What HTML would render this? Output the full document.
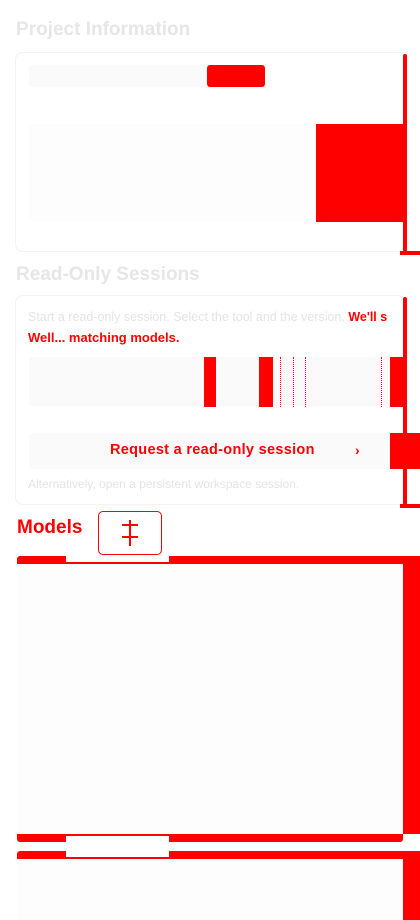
<!DOCTYPE html>
<html><head><meta charset="utf-8"><style>
html,body{margin:0;padding:0;background:#fff;width:420px;height:920px;overflow:hidden;position:relative;font-family:"Liberation Sans",sans-serif}
div{position:absolute;box-sizing:border-box}
.t{color:#e6e6e6;font-weight:bold;font-size:19px}
.r{background:#f00}
.f{background:#fafafa}
.g{color:#e4e4e4;font-size:12.5px;white-space:nowrap}
.rt{color:#f00;font-weight:bold;font-size:13px;white-space:nowrap}
.d{width:1px;height:50px;border-left:1px dotted #f00}
</style></head><body>
<div class="t" style="left:16px;top:19px">Project Information</div>
<div style="left:15px;top:52px;width:390px;height:200px;border:1px solid #f3f3f3;border-radius:8px"></div>
<div class="r" style="left:403px;top:54px;width:4px;height:198px;border-radius:3px"></div>
<div class="r" style="left:400px;top:251px;width:20px;height:4px"></div>
<div class="f" style="left:29px;top:65px;width:178px;height:22px"></div>
<div class="r" style="left:207px;top:65px;width:58px;height:22px;border-radius:3px"></div>
<div style="left:29px;top:124px;width:287px;height:97px;background:#fdfdfd"></div>
<div class="r" style="left:316px;top:124px;width:90px;height:98px"></div>

<div class="t" style="left:16px;top:264px">Read-Only Sessions</div>
<div style="left:15px;top:295px;width:390px;height:210px;border:1px solid #f3f3f3;border-radius:8px"></div>
<div class="r" style="left:403px;top:297px;width:4px;height:208px;border-radius:3px"></div>
<div class="r" style="left:400px;top:504px;width:20px;height:4px"></div>
<div class="g" style="left:28px;top:310px">Start a read-only session. Select the tool and the version. <b style="color:#f00">We'll s</b></div>
<div class="rt" style="left:28px;top:330px">Well... matching models.</div>
<div class="f" style="left:29px;top:357px;width:360px;height:49px"></div>
<div class="r" style="left:204px;top:357px;width:12px;height:50px"></div>
<div class="r" style="left:259px;top:357px;width:14px;height:50px"></div>
<div class="d" style="left:280px;top:357px"></div>
<div class="d" style="left:293px;top:357px"></div>
<div class="d" style="left:305px;top:357px"></div>
<div class="d" style="left:381px;top:357px"></div>
<div class="r" style="left:390px;top:357px;width:15px;height:50px"></div>
<div class="f" style="left:29px;top:433px;width:362px;height:36px;border-radius:4px"></div>
<div class="rt" style="left:110px;top:442px;font-size:14.5px;letter-spacing:0.3px">Request a read-only session</div>
<div class="rt" style="left:355px;top:442px;font-size:14px">›</div>
<div class="r" style="left:390px;top:433px;width:30px;height:36px"></div>
<div class="g" style="left:28px;top:477px;font-size:12px">Alternatively, open a persistent workspace session.</div>

<div style="left:17px;top:517px;color:#f00;font-weight:bold;font-size:19px">Models</div>
<div style="left:98px;top:511px;width:64px;height:44px;border:1px solid #f00;border-radius:5px"></div>
<div style="left:122px;top:524px;width:16px;height:2px;background:#f00"></div>
<div style="left:122px;top:536px;width:16px;height:2px;background:#f00"></div>
<div style="left:129px;top:520px;width:2px;height:26px;background:#f00"></div>

<div class="r" style="left:17px;top:556px;width:403px;height:8px;border-radius:3px 0 0 0"></div>
<div style="left:66px;top:556px;width:103px;height:7px;background:#fff;border-bottom:1px solid #f00"></div>
<div style="left:17px;top:564px;width:386px;height:270px;background:#fdfdfd"></div>
<div class="r" style="left:403px;top:556px;width:17px;height:278px"></div>
<div class="r" style="left:17px;top:834px;width:386px;height:8px;border-radius:0 0 3px 3px"></div>
<div style="left:66px;top:835px;width:103px;height:7px;background:#fff;border-top:1px solid #f00"></div>

<div class="r" style="left:17px;top:851px;width:403px;height:8px;border-radius:3px 0 0 0"></div>
<div style="left:66px;top:851px;width:103px;height:7px;background:#fff;border-bottom:1px solid #f00"></div>
<div style="left:17px;top:859px;width:386px;height:61px;background:#fdfdfd"></div>
<div class="r" style="left:403px;top:851px;width:17px;height:69px"></div>
</body></html>
